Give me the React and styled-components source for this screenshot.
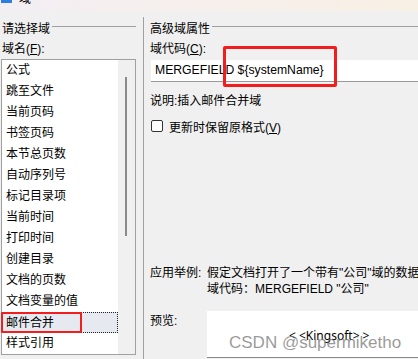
import React from 'react';
import styled, { createGlobalStyle } from 'styled-components';

const GlobalStyle = createGlobalStyle`
  html, body {
    margin: 0;
    padding: 0;
    background: #f0f0f0;
    overflow: hidden;
  }
  body {
    font-family: "Liberation Sans", "Noto Sans CJK SC", sans-serif;
    font-size: 12px;
    color: #000;
  }
`;

const Window = styled.div`
  width: 418px;
  height: 359px;
  display: flex;
  flex-direction: column;
  overflow: hidden;
  background: #f0f0f0;
`;

const TitleBar = styled.div`
  height: 11px;
  flex: none;
  display: flex;
  gap: 7px;
  padding-left: 1px;
  overflow: hidden;
  background: linear-gradient(90deg, #f3eef3 0%, #f6efec 50%, #f8f0e4 100%);
`;

const TitleIcon = styled.div`
  width: 11px;
  height: 14px;
  margin-top: -11px;
  background: #2f7de1;
`;

const TitleText = styled.div`
  font-size: 12px;
  line-height: 14px;
  margin-top: -8px;
`;

const Body = styled.div`
  flex: 1;
  display: flex;
  min-height: 0;
`;

const LeftPane = styled.div`
  width: 135px;
  flex: none;
  padding-left: 1px;
  display: flex;
  flex-direction: column;
`;

const Separator = styled.div`
  width: 1px;
  flex: none;
  margin: 6px 6px 0 7px;
  background: #a0a0a0;
`;

const RightPane = styled.div`
  flex: 1;
  min-width: 0;
  display: flex;
  flex-direction: column;
`;

const GroupHeader = styled.div`
  display: flex;
  align-items: center;
  gap: 2px;
  height: 16px;
  margin-top: 8px;
  padding-left: ${(p) => p.$indent || 0}px;
  white-space: nowrap;

  &::after {
    content: '';
    flex: 1;
    height: 1px;
    margin-top: -1px;
    background: #a0a0a0;
  }
`;

const FieldLabel = styled.div`
  height: 16px;
  line-height: 16px;
  margin-top: ${(p) => p.$top || 0}px;
  padding-left: ${(p) => p.$indent || 0}px;
  white-space: nowrap;
`;

const ListBox = styled.div`
  margin-top: 2px;
  height: 294px;
  border: 1px solid #a0a0a0;
  display: flex;
  background: #f0f0f0;
`;

const ListItems = styled.div`
  width: 116px;
  background: #fff;
  display: flex;
  flex-direction: column;
`;

const ListItem = styled.div`
  position: relative;
  height: 21px;
  line-height: 21px;
  padding-left: 4px;
  box-sizing: border-box;
  white-space: nowrap;
  ${(p) =>
    p.$selected &&
    `
    background: #e6e9ef;
    outline: 1px dotted #222;
    outline-offset: -1px;
    line-height: 23px;
  `}
`;

const Highlight = styled.div`
  position: absolute;
  left: -1px;
  top: 0;
  width: 81px;
  height: 21px;
  box-sizing: border-box;
  border: 2px solid #f21d1d;
  border-radius: 1px;
`;

const ScrollTrack = styled.div`
  flex: 1;
  display: flex;
  justify-content: center;
  padding-top: 17px;
`;

const ScrollThumb = styled.div`
  width: 2px;
  height: 159px;
  margin-left: -1px;
  background: #8a8a8a;
`;

const CodeField = styled.div`
  position: relative;
  margin: 3px 0 0 1px;
  height: 21px;
  line-height: 21px;
  padding-left: 4px;
  background: #fff;
  border-bottom: 1px solid #9a9a9a;
  font-size: 12.2px;
  white-space: nowrap;
`;

const CodeHighlight = styled.div`
  position: absolute;
  left: 72px;
  top: -14px;
  width: 114px;
  height: 41px;
  box-sizing: border-box;
  border: 3px solid #f21d1d;
  border-radius: 2px;
`;

const CheckRow = styled.label`
  display: flex;
  align-items: center;
  gap: 6px;
  height: 16px;
  margin-top: 9px;
  padding-left: 1px;
  white-space: nowrap;
`;

const CheckBox = styled.span`
  width: 12px;
  height: 12px;
  box-sizing: border-box;
  border: 1px solid #333;
  border-radius: 2px;
  background: #fff;
`;

const ExampleRow = styled.div`
  display: flex;
  margin-top: ${(p) => p.$top || 0}px;
  line-height: 16px;
  white-space: nowrap;
`;

const RowLabel = styled.div`
  width: 57px;
  flex: none;
`;

const ExampleText = styled.div`
  display: flex;
  flex-direction: column;
`;

const PreviewBox = styled.div`
  position: relative;
  flex: 1;
  height: 46px;
  margin-top: -2px;
  background: #fff;
  border-bottom: 1px solid #8a8a8a;
`;

const PreviewText = styled.div`
  padding: 17px 0 0 82px;
  font-size: 12px;
  line-height: 16px;
  font-family: "Noto Sans", "Liberation Sans", sans-serif;
  white-space: nowrap;
`;

const Watermark = styled.div`
  position: absolute;
  left: 22px;
  top: 21px;
  font-family: "Liberation Sans", Arial, sans-serif;
  font-size: 17px;
  line-height: 22px;
  color: rgba(120, 120, 120, 0.75);
  white-space: nowrap;
`;

const fields = [
  '公式',
  '跳至文件',
  '当前页码',
  '书签页码',
  '本节总页数',
  '自动序列号',
  '标记目录项',
  '当前时间',
  '打印时间',
  '创建目录',
  '文档的页数',
  '文档变量的值',
  '邮件合并',
  '样式引用',
];

export default function App() {
  return (
    <Window>
      <GlobalStyle />
      <TitleBar>
        <TitleIcon />
        <TitleText>域</TitleText>
      </TitleBar>
      <Body>
        <LeftPane>
          <GroupHeader $indent={1}>请选择域</GroupHeader>
          <FieldLabel $top={6} $indent={1}>域名(<u>F</u>):</FieldLabel>
          <ListBox>
            <ListItems>
              {fields.map((name) => (
                <ListItem key={name} $selected={name === '邮件合并'}>
                  {name}
                  {name === '邮件合并' && <Highlight />}
                </ListItem>
              ))}
            </ListItems>
            <ScrollTrack>
              <ScrollThumb />
            </ScrollTrack>
          </ListBox>
        </LeftPane>
        <Separator />
        <RightPane>
          <GroupHeader>高级域属性</GroupHeader>
          <FieldLabel $top={6}>域代码(<u>C</u>):</FieldLabel>
          <CodeField>
            MERGEFIELD ${'{systemName}'}
            <CodeHighlight />
          </CodeField>
          <FieldLabel $top={11}>说明:插入邮件合并域</FieldLabel>
          <CheckRow>
            <CheckBox />
            <span>更新时保留原格式(<u>V</u>)</span>
          </CheckRow>
          <ExampleRow $top={131}>
            <RowLabel>应用举例:</RowLabel>
            <ExampleText>
              <span>假定文档打开了一个带有"公司"域的数据源</span>
              <span>域代码：MERGEFIELD "公司"</span>
            </ExampleText>
          </ExampleRow>
          <ExampleRow $top={16}>
            <RowLabel>预览:</RowLabel>
            <PreviewBox>
              <PreviewText>&lt; &lt;Kingsoft&gt; &gt;</PreviewText>
              <Watermark>CSDN @supermiketho</Watermark>
            </PreviewBox>
          </ExampleRow>
        </RightPane>
      </Body>
    </Window>
  );
}
